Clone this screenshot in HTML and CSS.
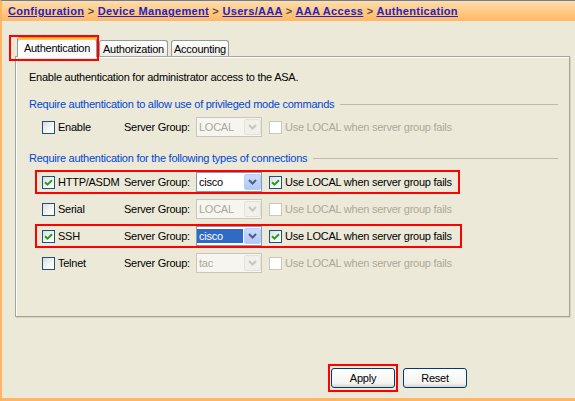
FILE: index.html
```html
<!DOCTYPE html>
<html>
<head>
<meta charset="utf-8">
<link rel="stylesheet" href="styles.css">
</head>
<body>
<div class="app">
  <div class="crumbs">
    <a>Configuration</a><span class="sep"> &gt; </span><a>Device Management</a><span class="sep"> &gt; </span><a>Users/AAA</a><span class="sep"> &gt; </span><a>AAA Access</a><span class="sep"> &gt; </span><a>Authentication</a>
  </div>
  <div class="main">
    <div class="tabs">
      <div class="tab active">Authentication</div>
      <div class="tab tab-authz">Authorization</div>
      <div class="tab tab-acct">Accounting</div>
      <div class="tab-mark"></div>
    </div>
    <div class="panel">
      <p class="intro">Enable authentication for administrator access to the ASA.</p>
      <div class="group g1">Require authentication to allow use of privileged mode commands</div>
      <div class="row first">
        <span class="cb"></span><span class="lbl">Enable</span><span class="sg">Server Group:</span>
        <span class="combo disabled"><span class="val">LOCAL</span><span class="cbtn"><svg width="9" height="6" viewBox="0 0 9 6"><path d="M1 1 L4.5 4.5 L8 1" fill="none" stroke="#C9C7BA" stroke-width="2"/></svg></span></span>
        <span class="cb disabled"></span><span class="use disabled">Use LOCAL when server group fails</span>
      </div>
      <div class="group g2">Require authentication for the following types of connections</div>
      <div class="row first marked">
        <span class="cb"><svg width="9" height="9" viewBox="0 0 9 9"><path d="M1 4.2 L3.5 6.7 L8 2.2" fill="none" stroke="#21A121" stroke-width="2"/></svg></span><span class="lbl">HTTP/ASDM</span><span class="sg">Server Group:</span>
        <span class="combo"><span class="val">cisco</span><span class="cbtn"><svg width="9" height="6" viewBox="0 0 9 6"><path d="M1 1 L4.5 4.5 L8 1" fill="none" stroke="#4D6185" stroke-width="2"/></svg></span></span>
        <span class="cb"><svg width="9" height="9" viewBox="0 0 9 9"><path d="M1 4.2 L3.5 6.7 L8 2.2" fill="none" stroke="#21A121" stroke-width="2"/></svg></span><span class="use">Use LOCAL when server group fails</span>
      </div>
      <div class="row">
        <span class="cb"></span><span class="lbl">Serial</span><span class="sg">Server Group:</span>
        <span class="combo disabled"><span class="val">LOCAL</span><span class="cbtn"><svg width="9" height="6" viewBox="0 0 9 6"><path d="M1 1 L4.5 4.5 L8 1" fill="none" stroke="#C9C7BA" stroke-width="2"/></svg></span></span>
        <span class="cb disabled"></span><span class="use disabled">Use LOCAL when server group fails</span>
      </div>
      <div class="row marked wide">
        <span class="cb"><svg width="9" height="9" viewBox="0 0 9 9"><path d="M1 4.2 L3.5 6.7 L8 2.2" fill="none" stroke="#21A121" stroke-width="2"/></svg></span><span class="lbl">SSH</span><span class="sg">Server Group:</span>
        <span class="combo"><span class="val sel">cisco</span><span class="cbtn"><svg width="9" height="6" viewBox="0 0 9 6"><path d="M1 1 L4.5 4.5 L8 1" fill="none" stroke="#4D6185" stroke-width="2"/></svg></span></span>
        <span class="cb"><svg width="9" height="9" viewBox="0 0 9 9"><path d="M1 4.2 L3.5 6.7 L8 2.2" fill="none" stroke="#21A121" stroke-width="2"/></svg></span><span class="use">Use LOCAL when server group fails</span>
      </div>
      <div class="row">
        <span class="cb"></span><span class="lbl">Telnet</span><span class="sg">Server Group:</span>
        <span class="combo disabled"><span class="val">tac</span><span class="cbtn"><svg width="9" height="6" viewBox="0 0 9 6"><path d="M1 1 L4.5 4.5 L8 1" fill="none" stroke="#C9C7BA" stroke-width="2"/></svg></span></span>
        <span class="cb disabled"></span><span class="use disabled">Use LOCAL when server group fails</span>
      </div>
    </div>
    <div class="actions">
      <span class="btn-mark"><button class="xp-btn">Apply</button></span>
      <button class="xp-btn reset">Reset</button>
    </div>
  </div>
</div>
</body>
</html>
```
FILE: styles.css
```css
* { box-sizing: border-box; }
html, body { margin: 0; padding: 0; }
body {
  width: 575px;
  height: 401px;
  overflow: hidden;
  background: #ECE9D8;
  font-family: "Liberation Sans", Arial, sans-serif;
  font-size: 11px;
  letter-spacing: -0.25px;
  color: #000;
}
.app {
  height: 401px;
  border-top: 1px solid #6E7C9A;
  border-left: 2px solid #FFB563;
  border-bottom: 3px solid #FFB563;
  display: flex;
  flex-direction: column;
}
.crumbs {
  height: 20px;
  flex: none;
  background: linear-gradient(#FFDDAA, #FFB862);
  padding: 1px 0 0 6px;
  font-weight: bold;
  line-height: 19px;
  white-space: nowrap;
  letter-spacing: 0.32px;
}
.crumbs a { color: #2323C4; text-decoration: underline; }
.crumbs .sep { color: #5B4E3E; white-space: pre; }
.main { padding: 16px 0 0 13px; }
.tabs {
  position: relative;
  display: flex;
  align-items: flex-end;
  padding-left: 2px;
  height: 20px;
  margin-bottom: -1px;
}
.tab {
  height: 16px;
  margin-bottom: 1px;
  border: 1px solid #919B9C;
  border-bottom: none;
  border-radius: 3px 3px 0 0;
  background: linear-gradient(#FFFFFF, #ECEBE6);
  line-height: 15px;
  text-align: center;
  white-space: nowrap;
}
.tab.active {
  position: relative;
  z-index: 1;
  width: 80px;
  height: 20px;
  margin-bottom: 0;
  border-top: 1px solid #E68B2C;
  box-shadow: inset 0 2px 0 #FFC83C;
  background: #FCFCFE;
  line-height: 19px;
  padding-top: 1px;
}
.tab-authz { width: 69px; margin-left: 2px; padding-top: 1px; }
.tab-acct { width: 58px; margin-left: 3px; padding-top: 1px; }
.tab-mark {
  position: absolute;
  left: -6px;
  top: -2px;
  width: 90px;
  height: 26px;
  border: 2px solid #FF0000;
  z-index: 2;
  pointer-events: none;
}
.panel {
  width: 555px;
  height: 261px;
  border: 1px solid #A5A496;
  box-shadow: inset 1px 1px 0 #FFFFFF, 1px 1px 0 #D6D3C4;
  padding: 14px 11px 0 13px;
}
.intro { margin: 0; line-height: 13px; }
.group {
  display: flex;
  align-items: center;
  color: #0046D5;
  line-height: 13px;
  white-space: nowrap;
}
.group::after {
  content: "";
  flex: 1;
  border-top: 1px solid #BDBBAC;
  margin-left: 6px;
}
.g1 { margin-top: 14px; }
.g2 { margin-top: 13px; }
.row {
  display: flex;
  align-items: center;
  width: 425px;
  height: 24px;
  border: 2px solid transparent;
  padding-left: 5px;
  margin-left: 6px;
  margin-top: 3px;
  white-space: nowrap;
}
.g1 + .row { margin-top: 4px; }
.g2 + .row { margin-top: 5px; }
.row.marked { border-color: #FF0000; }
.row.wide { width: 427px; }
.cb {
  flex: none;
  width: 13px;
  height: 13px;
  border: 1px solid #1C5180;
  background: linear-gradient(135deg, #DCDCD7, #FFFFFF 80%);
  display: flex;
  align-items: center;
  justify-content: center;
}
.cb.disabled { border-color: #CAC8BB; background: #FFFFFF; }
.lbl { width: 66px; margin-left: 3px; }
.sg { width: 72px; }
.combo {
  flex: none;
  width: 66px;
  height: 20px;
  border: 1px solid #7F9DB9;
  background: #FFFFFF;
  display: flex;
  padding: 1px 0;
}
.combo .val {
  flex: 1;
  margin: 1px 1px 1px 0;
  padding-left: 2px;
  line-height: 14px;
}
.combo .val.sel { background: #316AC5; color: #FFFFFF; }
.cbtn {
  width: 17px;
  border: 1px solid #B8CDF8;
  border-radius: 2px;
  background: linear-gradient(#CCDAFD, #B3C7F5);
  display: flex;
  align-items: center;
  justify-content: center;
}
.combo.disabled { border-color: #C9C7BA; background: #F6F5EF; color: #ACA899; }
.combo.disabled .cbtn { background: #F1F0EA; border-color: #E4E2D8; }
.combo + .cb { margin-left: 7px; }
.use { margin-left: 3px; }
.use.disabled { color: #ACA899; }
.actions {
  display: flex;
  justify-content: flex-end;
  align-items: center;
  margin-top: 47px;
  padding-right: 108px;
}
.btn-mark {
  display: flex;
  border: 2px solid #FF0000;
  padding: 2px 1px;
}
.xp-btn {
  width: 64px;
  height: 20px;
  padding: 0;
  border: 1px solid #003C74;
  border-radius: 3px;
  background: linear-gradient(#FFFFFF, #F3F3EE 80%, #D8D2C6);
  font-family: inherit;
  font-size: 11px;
  letter-spacing: -0.25px;
  color: #000;
}
.reset { margin-left: 5px; }
```
